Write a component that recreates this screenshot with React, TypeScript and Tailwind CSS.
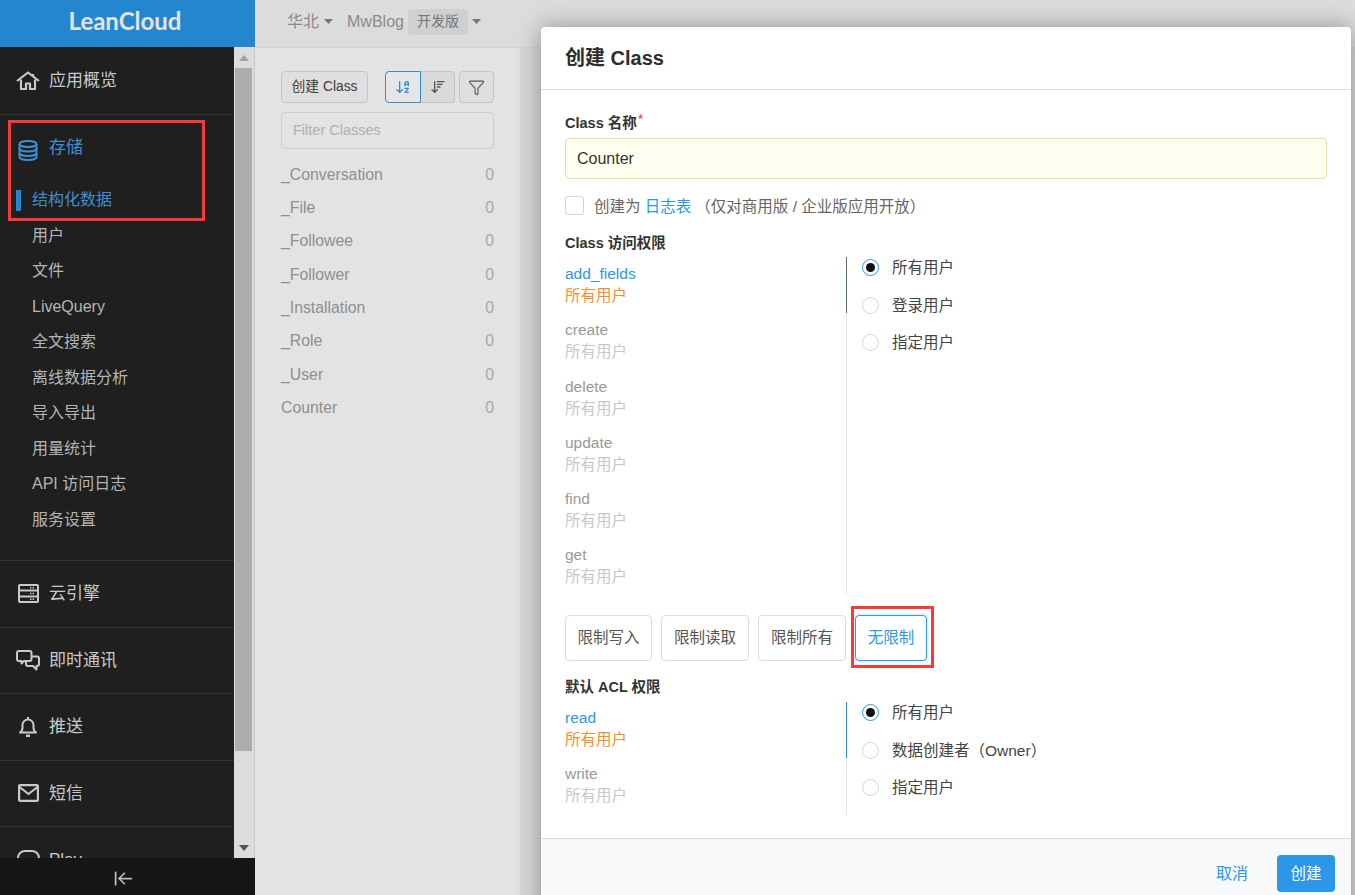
import React from 'react';
import { ArrowLeftToLine, Funnel, ArrowDownAZ, ArrowDownWideNarrow } from 'lucide-react';

const FONT = "font-['Liberation_Sans','Noto_Sans_CJK_SC',sans-serif]";

const subItems = ['用户', '文件', 'LiveQuery', '全文搜索', '离线数据分析', '导入导出', '用量统计', 'API 访问日志', '服务设置'];
const classes = ['_Conversation', '_File', '_Followee', '_Follower', '_Installation', '_Role', '_User', 'Counter'];
const perms = ['create', 'delete', 'update', 'find', 'get'];

function HomeIcon() {
  return (
    <svg width="24" height="19" viewBox="0 0 24 19" fill="none" stroke="currentColor" strokeWidth="2.2">
      <path d="M1 10 12 1.500 23 10" strokeLinejoin="round" />
      <path d="M17 3v3" />
      <path d="M5 8.500V18h5v-5.500h4V18h5V8.500" strokeLinejoin="round" />
    </svg>
  );
}

function DbIcon() {
  return (
    <svg width="20" height="21" viewBox="0 0 20 21" fill="none" stroke="currentColor" strokeWidth="2">
      <ellipse cx="10" cy="4" rx="8.500" ry="3" />
      <path d="M1.500 4v13c0 1.700 3.800 3 8.500 3s8.500-1.300 8.500-3V4" />
      <path d="M1.500 8.500c0 1.700 3.800 3 8.500 3s8.500-1.300 8.500-3" />
      <path d="M1.500 13c0 1.700 3.800 3 8.500 3s8.500-1.300 8.500-3" />
    </svg>
  );
}

function ServerIcon() {
  return (
    <svg width="21" height="19" viewBox="0 0 21 19" fill="none" stroke="currentColor" strokeWidth="2">
      <rect x="1" y="1" width="19" height="17" rx="1" />
      <path d="M1 6.500h19M1 12.500h19" />
      <path d="M12 3.800h5M12 9.500h5M12 15.300h5" strokeWidth="1.500" strokeDasharray="1.500 1" />
    </svg>
  );
}

function ChatIcon() {
  return (
    <svg width="24" height="21" viewBox="0 0 24 21" fill="none" stroke="currentColor" strokeWidth="2" strokeLinejoin="round">
      <path d="M3 1h10.500a2 2 0 0 1 2 2v6a2 2 0 0 1-2 2H8l-2.500 2.500V11H3a2 2 0 0 1-2-2V3a2 2 0 0 1 2-2z" />
      <path d="M15.500 6.500H21a2 2 0 0 1 2 2v5.500a2 2 0 0 1-2 2h-.5v3.500L17 16h-5a2 2 0 0 1-2-2v-3" />
    </svg>
  );
}

function BellIcon() {
  return (
    <svg width="18" height="21" viewBox="0 0 18 21" fill="none" stroke="currentColor" strokeWidth="2" strokeLinejoin="round">
      <path d="M1 16.500c1.500-1 2.500-2.500 2.500-5V9a5.500 5.500 0 0 1 11 0v2.500c0 2.500 1 4 2.500 5z" />
      <path d="M9 1v2" />
      <path d="M7 19.800h4" strokeWidth="2.500" />
    </svg>
  );
}

function MailIcon() {
  return (
    <svg width="21" height="18" viewBox="0 0 21 18" fill="none" stroke="currentColor" strokeWidth="2.200" strokeLinejoin="round">
      <rect x="1.100" y="1.100" width="18.800" height="15.800" rx="1" />
      <path d="M1.500 3l9 7 9-7" />
    </svg>
  );
}

function PlayIcon() {
  return (
    <svg width="23" height="20" viewBox="0 0 23 20" fill="none" stroke="currentColor" strokeWidth="2">
      <rect x="1" y="1" width="21" height="18" rx="7" />
    </svg>
  );
}

function NavSection({ icon, label, iconClass }: { icon: React.ReactNode; label: string; iconClass: string }) {
  return (
    <div className="h-[66.5px] shrink-0 flex items-center border-b border-[#333333] text-[#c9c9c9]">
      <span className={`w-[49px] flex ${iconClass}`}>{icon}</span>
      <span className="text-[17px]">{label}</span>
    </div>
  );
}

function Radio({ checked, label }: { checked?: boolean; label: string }) {
  return (
    <div className="h-[37.500px] flex items-center text-[15.500px] text-[#444444]">
      <span className={`w-[17px] h-[17px] rounded-full border flex items-center justify-center mr-[13px] ${checked ? 'border-[#2c97e8]' : 'border-[#d5d5d5]'}`}>
        {checked && <span className="w-[9px] h-[9px] rounded-full bg-[#111111]" />}
      </span>
      {label}
    </div>
  );
}

function Perm({ name, active }: { name: string; active?: boolean }) {
  return (
    <div className="h-[56.250px] text-[15.500px] leading-[22px] pt-[6px]">
      <div className={active ? 'text-[#2c97e8]' : 'text-[#999999]'}>{name}</div>
      <div className={active ? 'text-[#fb8c2b]' : 'text-[#c8c8c8]'}>所有用户</div>
    </div>
  );
}

export default function App() {
  return (
    <div className={`relative w-[1355px] h-[895px] overflow-hidden flex bg-[#dcdcdc] ${FONT}`}>
      {/* sidebar */}
      <aside className="w-[255px] shrink-0 flex flex-col bg-[#1f1f1f]">
        <div className="h-[47px] shrink-0 bg-[#2586d0] flex items-center justify-center text-[24px] font-['Lato',sans-serif] font-bold text-[#e3e3e3] pr-[5px] pb-[5px]">
          LeanCloud
        </div>
        <div className="flex-1 min-h-0 flex">
          <nav className="w-[234px] overflow-hidden flex flex-col">
            <div className="h-[68px] shrink-0 flex items-center border-b border-[#333333] text-[#c9c9c9]">
              <span className="w-[49px] pl-[16px]"><HomeIcon /></span>
              <span className="text-[17px]">应用概览</span>
            </div>
            <div className="h-[446px] shrink-0 border-b border-[#333333]">
              <div className="h-[67.500px] flex items-center text-[#3f8fd0]">
                <span className="w-[49px] pl-[18px] pt-[3px]"><DbIcon /></span>
                <span className="text-[17px] pb-[2px]">存储</span>
              </div>
              <div className="h-[35.500px] relative flex items-center pl-[32px] text-[16px] text-[#3f8fd0]">
                <span className="absolute left-[16px] top-[7px] h-[21px] w-[5px] bg-[#2586d0]" />
                结构化数据
              </div>
              {subItems.map((s) => (
                <div key={s} className="h-[35.500px] flex items-center pl-[32px] text-[16px] text-[#b5b5b5]">{s}</div>
              ))}
            </div>
            <NavSection icon={<ServerIcon />} iconClass="pl-[18px]" label="云引擎" />
            <NavSection icon={<ChatIcon />} iconClass="pl-[16px]" label="即时通讯" />
            <NavSection icon={<BellIcon />} iconClass="pl-[19px]" label="推送" />
            <NavSection icon={<MailIcon />} iconClass="pl-[18px]" label="短信" />
            <NavSection icon={<PlayIcon />} iconClass="pl-[17px]" label="Play" />
          </nav>
          <div className="w-[21px] shrink-0 flex flex-col items-center bg-[#dcdcdc] border-r border-[#c8c8c8]">
            <div className="h-[21px] flex items-center justify-center">
              <svg width="10" height="6" viewBox="0 0 10 6"><path d="M5 0l5 6H0z" fill="#a3a3a3" /></svg>
            </div>
            <div className="w-[17px] h-[683px] bg-[#adadad] mr-[2px]" />
            <div className="flex-1 flex items-end justify-center pb-[7px]">
              <svg width="10" height="6" viewBox="0 0 10 6"><path d="M5 6L0 0h10z" fill="#555555" /></svg>
            </div>
          </div>
        </div>
        <div className="h-[37px] shrink-0 bg-[#161616] flex items-center justify-center text-[#bdbdbd] pr-[8px] pt-[4px]">
          <ArrowLeftToLine size={21} strokeWidth={2} />
        </div>
      </aside>

      <div className="flex-1 flex flex-col min-w-0">
        {/* top bar */}
        <header className="h-[48px] shrink-0 bg-[#dcdcdc] border-b border-[#d2d2d2] flex items-center pl-[32px] text-[#8a8a8a] text-[16px] pb-[4px]">
          <span>华北</span>
          <svg className="ml-[5px] mr-[14px]" width="9" height="5" viewBox="0 0 9 5"><path d="M0 0h9L4.500 5z" fill="#777777" /></svg>
          <span>MwBlog</span>
          <span className="ml-[4px] h-[26px] px-[9px] rounded-[4px] bg-[#d0d0d0] text-[14px] text-[#777777] flex items-center">开发版</span>
          <svg className="ml-[4px]" width="9" height="5" viewBox="0 0 9 5"><path d="M0 0h9L4.500 5z" fill="#777777" /></svg>
        </header>

        <div className="flex-1 flex min-h-0">
          {/* class list */}
          <section className="w-[265px] shrink-0 bg-[#e3e3e3] pl-[26px] pr-[26px] pt-[23px]">
            <div className="flex items-center h-[32px]">
              <button className="h-[32px] w-[87px] pt-px rounded-[4px] border border-[#c4c4c4] bg-[#dfdfdf] text-[13.800px] text-[#3c3c3c]">创建 Class</button>
              <div className="ml-[17px] flex h-[32px]">
                <span className="w-[36px] rounded-l-[4px] border border-[#2c8fd8] bg-[#e6e6e6] flex items-center justify-center text-[#2c8fd8]">
                  <ArrowDownAZ size={16} strokeWidth={2} />
                </span>
                <span className="w-[34px] rounded-r-[4px] border border-l-0 border-[#c4c4c4] bg-[#dadada] flex items-center justify-center text-[#555555]">
                  <ArrowDownWideNarrow size={16} strokeWidth={2} />
                </span>
              </div>
              <span className="ml-[4px] w-[35px] h-[32px] rounded-[4px] border border-[#c4c4c4] bg-[#dfdfdf] flex items-center justify-center text-[#555555]">
                <Funnel size={17} strokeWidth={1.5} />
              </span>
            </div>
            <div className="mt-[9px] h-[37px] rounded-[4px] border border-[#cdcdcd] flex items-center pl-[11px] text-[14.500px] text-[#b0b0b0]">
              Filter Classes
            </div>
            <ul className="mt-[9px]">
              {classes.map((c) => (
                <li key={c} className="h-[33.300px] flex items-center justify-between text-[15.800px] text-[#8f8f8f]">
                  <span>{c}</span>
                  <span className="text-[#a8a8a8]">0</span>
                </li>
              ))}
            </ul>
          </section>
          {/* table area behind the modal */}
          <div className="flex-1 bg-[#d8d8d8]" />
        </div>
      </div>

      {/* modal */}
      <div className="absolute left-[541px] top-[27px] w-[810px] h-[900px] bg-white rounded-[4px] shadow-[0_0_24px_rgba(0,0,0,0.35)]">
        <div className="h-[63px] border-b border-[#dddddd] flex items-center pl-[24px] text-[20px] font-bold text-[#2d2d2d]">创建 Class</div>
        <div className="pl-[24px] pr-[24px]">
          <div className="pt-[23px] h-[48px] text-[14.500px] font-bold text-[#333333] leading-[20px]">
            Class 名称<span className="relative -top-[4px] ml-[1px] text-[#f04040] font-normal">*</span>
          </div>
          <div className="h-[41px] rounded-[4px] border border-[#e6e19a] bg-[#fffff0] flex items-center pl-[11px] text-[16px] text-[#333333]">Counter</div>
          <div className="mt-[17px] flex items-center h-[19px] text-[15.500px] text-[#666666]">
            <span className="w-[19px] h-[19px] rounded-[3px] border border-[#d5d5d5] mr-[10px]" />
            <span className="relative top-px">创建为 <span className="text-[#2c97e8] mr-[4px]">日志表</span>（仅对商用版 / 企业版应用开放）</span>
          </div>
          <div className="mt-[18px] h-[20px] leading-[20px] text-[14.500px] font-bold text-[#333333]">Class 访问权限</div>
          <div className="mt-[4px] flex h-[338px]">
            <div className="w-[281px]">
              <Perm name="add_fields" active />
              {perms.map((p) => <Perm key={p} name={p} />)}
            </div>
            <div className="relative border-l border-[#e5e5e5] pl-[15px]">
              <span className="absolute -left-px top-0 h-[56px] w-px bg-[#5a6b78]" />
              <div className="-mt-[8px]">
                <Radio checked label="所有用户" />
                <Radio label="登录用户" />
                <Radio label="指定用户" />
              </div>
            </div>
          </div>
          <div className="mt-[20px] flex gap-[9px] h-[46px] text-[15.500px]">
            {['限制写入', '限制读取', '限制所有'].map((b, i) => (
              <button key={b} className={`${i === 0 ? 'w-[87px]' : 'w-[88px]'} rounded-[4px] border border-[#dddddd] text-[#555555]`}>{b}</button>
            ))}
            <button className="w-[72px] rounded-[4px] border border-[#2c97e8] text-[#2c97e8] shadow-[0_0_0_2px_#e8f3fc]">无限制</button>
          </div>
          <div className="mt-[16px] h-[20px] leading-[20px] text-[14.500px] font-bold text-[#333333]">默认 ACL 权限</div>
          <div className="mt-[5px] flex h-[113px]">
            <div className="w-[281px] -mt-[1px]">
              <Perm name="read" active />
              <Perm name="write" />
            </div>
            <div className="relative border-l border-[#e5e5e5] pl-[15px]">
              <span className="absolute -left-px top-0 h-[56px] w-px bg-[#2c8fd8]" />
              <div className="-mt-[8px]">
                <Radio checked label="所有用户" />
                <Radio label="数据创建者（Owner）" />
                <Radio label="指定用户" />
              </div>
            </div>
          </div>
        </div>
        <div className="mt-[23px] h-[90px] border-t border-[#dcdcdc] bg-[#f8f9fb] flex items-start justify-end pr-[16px] pt-[16px]">
          <span className="h-[37px] flex items-center text-[16px] text-[#2c97e8] mr-[29px]">取消</span>
          <button className="w-[58px] h-[37px] rounded-[4px] bg-[#2c97e8] text-white text-[15.500px]">创建</button>
        </div>
      </div>

      {/* red annotation boxes */}
      <div className="absolute left-[8px] top-[120px] w-[197px] h-[101px] border-[3px] border-[#f43a3a]" />
      <div className="absolute left-[851px] top-[606px] w-[83px] h-[62px] border-[3px] border-[#f43a3a]" />
    </div>
  );
}
